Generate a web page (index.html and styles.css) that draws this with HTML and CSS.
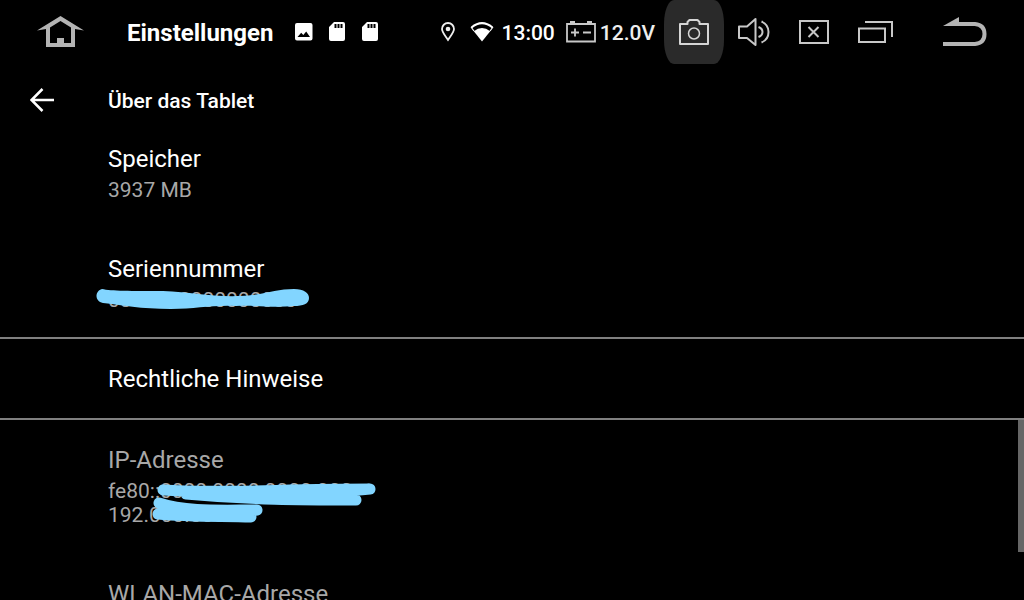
FILE: index.html
```html
<!DOCTYPE html>
<html lang="de">
<head>
    <meta charset="UTF-8">
    <meta name="viewport" content="width=device-width, initial-scale=1.0">
    <title>Einstellungen</title>
    <link rel="stylesheet" href="styles.css">
</head>
<body>
    <!-- System bar -->
    <header class="status-bar">
        <button type="button" class="home-button" aria-label="Startseite">
            <svg width="48" height="32" viewBox="0 0 48 32">
                <path fill="#b4b4b4" fill-rule="evenodd" d="M23.500 0L47 14.500L38 13V31H9V13L0 14.500ZM23.500 5L13 11.500V27H20V22H27V27H34V11.500Z"/>
            </svg>
        </button>
        <span class="app-name">Einstellungen</span>
        <div class="notifications">
            <svg width="18" height="20" viewBox="0 0 18 20">
                <path fill="#fff" fill-rule="evenodd" d="M2 1H15.500Q17.500 1 17.500 3V16.500Q17.500 18.500 15.500 18.500H2Q0 18.500 0 16.500V3Q0 1 2 1ZM2.500 15H15L11.200 9.500L8.300 13L6.200 10.800Z"/>
            </svg>
            <svg width="18" height="20" viewBox="0 0 18 20">
                <path fill="#fff" fill-rule="evenodd" d="M6 0H15Q17 0 17 2V17Q17 19 15 19H3Q1 19 1 17V5ZM6.500 2V6H8.500V2ZM9.500 2V6H11.500V2ZM12.500 2V6H14.500V2Z"/>
            </svg>
            <svg width="18" height="20" viewBox="0 0 18 20">
                <path fill="#fff" fill-rule="evenodd" d="M6 0H15Q17 0 17 2V17Q17 19 15 19H3Q1 19 1 17V5ZM6.500 2V6H8.500V2ZM9.500 2V6H11.500V2ZM12.500 2V6H14.500V2Z"/>
            </svg>
        </div>

        <div class="system-info">
            <svg class="location" width="14" height="20" viewBox="0 0 14 20">
                <path fill="none" stroke="#eee" stroke-width="1.800" d="M7 18C4 13.500 1 10 1 7A6 6 0 0 1 13 7C13 10 10 13.500 7 18Z"/>
                <circle cx="7" cy="7" r="2.300" fill="#eee"/>
            </svg>
            <svg class="wifi" width="24" height="20" viewBox="0 0 24 20">
                <path fill="#fff" d="M12 19.500L3.800 9.200Q12 2.800 20.200 9.200Z"/>
                <path fill="none" stroke="#fff" stroke-width="2" d="M1.500 5.500Q12 -3.200 22.500 5.500"/>
                <path fill="none" stroke="#fff" stroke-width="1.200" d="M1 5L4 9M23 5L20 9"/>
            </svg>
            <span class="clock">13:00</span>
            <svg width="30" height="22" viewBox="0 0 30 22">
                <path fill="none" stroke="#c8c8c8" stroke-width="1.800" d="M1 3H29V20.500H1Z"/>
                <path fill="#c8c8c8" d="M4 0H9V3H4ZM21 0H26V3H21Z"/>
                <path fill="none" stroke="#c8c8c8" stroke-width="1.800" d="M5 11.500H13M9 7.500V15.500M17 11.500H25"/>
            </svg>
            <span class="voltage">12.0V</span>
        </div>

        <div class="controls">
            <button type="button" class="camera-button" aria-label="Bildschirmfoto">
                <svg width="30" height="26" viewBox="0 0 30 26">
                    <path fill="none" stroke="#d6d6d6" stroke-width="2" stroke-linejoin="round" d="M1 5H8.500V3L10.500 1H18.500L20.500 3V5H29V25H1Z"/>
                    <circle cx="15" cy="14.500" r="5.500" fill="none" stroke="#d6d6d6" stroke-width="1.500"/>
                </svg>
            </button>
            <button type="button" aria-label="Lautstärke">
                <svg width="32" height="30" viewBox="0 0 32 30">
                    <path fill="none" stroke="#c8c8c8" stroke-width="2" stroke-linejoin="round" d="M1 9.500H9L17.500 2V28L9 21H1Z"/>
                    <path fill="none" stroke="#c8c8c8" stroke-width="2" d="M20.500 10Q24.500 11.500 24.500 15T20.500 20M23.500 4.500Q30.500 7.500 30.500 15T23.500 25.500"/>
                </svg>
            </button>
            <button type="button" aria-label="Schließen">
                <svg width="32" height="26" viewBox="0 0 32 26">
                    <path fill="none" stroke="#c8c8c8" stroke-width="2" d="M2 2H30V24H2ZM10.500 8L20.500 18M20.500 8L10.500 18"/>
                </svg>
            </button>
            <button type="button" class="recents-button" aria-label="Letzte Apps">
                <svg width="36" height="24" viewBox="0 0 36 24">
                    <path fill="none" stroke="#c8c8c8" stroke-width="2" d="M1 8.500H27V22H1ZM7 2H34V17"/>
                </svg>
            </button>
            <button type="button" class="return-button" aria-label="Zurück">
                <svg width="44" height="30" viewBox="0 0 44 30">
                    <path fill="none" stroke="#b4b4b4" stroke-width="4" d="M8 7H32Q41.500 8 41.500 17T32 27H0"/>
                    <path fill="#b4b4b4" d="M0 9L16 0V9Z"/>
                </svg>
            </button>
        </div>
    </header>

    <div class="toolbar">
        <a href="#" class="up-link" aria-label="Nach oben">
            <svg width="24" height="24" viewBox="0 0 24 24">
                <path fill="none" stroke="#fff" stroke-width="2.500" d="M24 12H2M12.500 1L1.500 12L12.500 23"/>
            </svg>
        </a>
        <h1>Über das Tablet</h1>
    </div>

    <!-- Device details -->
    <main class="settings-list">
        <section class="group">
            <div class="item">
                <h2>Speicher</h2>
                <p>3937 MB</p>
            </div>
            <div class="item">
                <h2>Seriennummer</h2>
                <p>0000000000000000</p>
                <svg class="marker marker-serial" width="216" height="24" viewBox="0 0 216 24">
                    <path fill="#82d5ff" d="M6 1C15 3 35 3 67 3C95 4 115 9 144 8C168 7 180 1 198 1C208 1 213 5 213 10C213 16 207 18 198 18C176 20 160 17 140 18C115 17 100 21 75 21C45 21 25 17 7 15C-2 13 -1 3 6 1Z"/>
                </svg>
            </div>
        </section>
        <section class="group">
            <div class="item">
                <h2>Rechtliche Hinweise</h2>
            </div>
        </section>
        <section class="group disabled">
            <div class="item">
                <h2>IP-Adresse</h2>
                <p>fe80::0000:0000:0000:000</p>
                <p>192.000.000.00</p>
                <svg class="marker marker-ip" width="226" height="40" viewBox="0 0 226 40">
                    <path fill="none" stroke="#82d5ff" stroke-width="11" stroke-linecap="round" stroke-linejoin="round" d="M12 7C65 11 130 6 219 6C165 12 95 7 35 11C100 17 150 17 205 17"/>
                    <path fill="none" stroke="#82d5ff" stroke-width="11" stroke-linecap="round" stroke-linejoin="round" d="M8 20C35 29 70 27 106 27C75 33 45 29 7 31C40 34 70 33 100 34"/>
                </svg>
            </div>
            <div class="item">
                <h2>WLAN-MAC-Adresse</h2>
            </div>
        </section>
        <div class="scroll-thumb"></div>
    </main>
</body>
</html>
```
FILE: styles.css
```css
* {
    box-sizing: border-box;
}

body {
    display: flex;
    flex-direction: column;
    height: 100vh;
    margin: 0;
    overflow: hidden;
    background-color: #000;
    color: #fff;
    font-family: Roboto, sans-serif;
}

h1, h2, p {
    margin: 0;
}

svg {
    display: block;
    flex: none;
}

button {
    padding: 0;
    border: none;
    background: none;
    cursor: pointer;
}

/* System bar */
.status-bar {
    display: flex;
    align-items: center;
    flex: none;
    height: 64px;
    padding: 0 37px;
}

.app-name {
    padding-top: 2px;
    margin-left: 42px;
    font-size: 24px;
    font-weight: 700;
    line-height: 32px;
}

.notifications {
    display: flex;
    gap: 15px;
    margin-left: 22px;
}

.system-info {
    display: flex;
    align-items: center;
    margin-left: auto;
    font-size: 21px;
    font-weight: 500;
    line-height: 32px;
}

.wifi {
    margin-left: 15px;
}

.clock {
    padding-top: 2px;
    margin: 0 11px 0 8px;
}

.voltage {
    padding-top: 2px;
    margin-left: 4px;
    color: #eee;
}

.controls {
    display: flex;
    align-items: center;
    gap: 28px;
    margin-left: 9px;
}

.camera-button {
    display: flex;
    align-items: center;
    justify-content: center;
    width: 60px;
    height: 64px;
    margin-right: -14px;
    border-radius: 10px / 24px;
    background-color: #2a2a2a;
}

.return-button {
    margin-left: 21px;
}

/* Title row */
.toolbar {
    display: flex;
    align-items: center;
    flex: none;
    height: 72px;
    padding-left: 30px;
}

.toolbar h1 {
    padding-top: 2px;
    margin-left: 54px;
    font-size: 21px;
    font-weight: 500;
    line-height: 32px;
}

/* Settings */
.settings-list {
    position: relative;
    flex: 1;
    min-height: 0;
    overflow: hidden;
}

.group + .group {
    border-top: 2px solid #808080;
}

.item {
    position: relative;
    padding: 25px 108px;
}

.item + .item {
    padding-top: 27px;
}

.item:only-child {
    padding-bottom: 24px;
}

.group:first-child .item:first-child {
    padding-top: 8px;
}

.item h2 {
    font-size: 24px;
    font-weight: 400;
    line-height: 30px;
}

.item p {
    color: #a8a8a8;
    font-size: 21px;
    line-height: 24px;
}

.item h2 + p {
    margin-top: 4px;
}

.disabled h2 {
    color: #a8a8a8;
}

/* Marker strokes over private values */
.marker {
    position: absolute;
}

.marker-serial {
    left: 96px;
    bottom: 25px;
}

.marker-ip {
    left: 151px;
    bottom: 29px;
}

.scroll-thumb {
    position: absolute;
    top: 284px;
    right: 0;
    width: 6px;
    height: 132px;
    background-color: #666;
}
```
